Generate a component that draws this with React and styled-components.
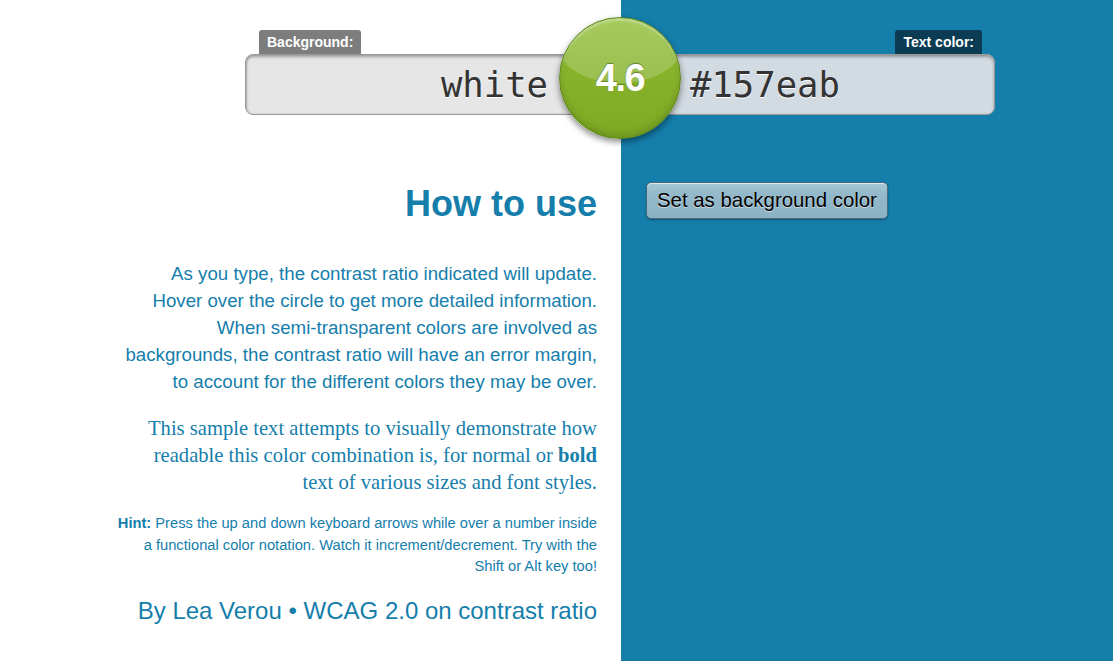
import React from 'react';
import styled, { createGlobalStyle } from 'styled-components';

const BLUE = '#157eab';

const GlobalStyle = createGlobalStyle`
  html, body {
    margin: 0;
    padding: 0;
  }
  body {
    font-family: 'Liberation Sans', Helvetica, Arial, sans-serif;
  }
`;

const Page = styled.div`
  min-height: 100vh;
  background: linear-gradient(to right, #fff 621px, ${BLUE} 621px);
  color: ${BLUE};
`;

const Header = styled.header`
  display: flex;
  align-items: flex-start;
  padding: 30px 0 0 245px;
`;

const Field = styled.div`
  display: flex;
  flex-direction: column;
  align-items: ${({ side }) => (side === 'right' ? 'flex-end' : 'flex-start')};
  position: relative;
  z-index: 1;
`;

const Label = styled.label`
  display: block;
  height: 24px;
  line-height: 25px;
  padding: 0 8px;
  margin: ${({ side }) => (side === 'right' ? '0 13px 0 0' : '0 0 0 14px')};
  border-radius: 3px 3px 0 0;
  background: ${({ side }) => (side === 'right' ? '#0b3c54' : '#7d7d7d')};
  color: #fff;
  font-size: 14px;
  font-weight: bold;
`;

const ColorInput = styled.input`
  box-sizing: border-box;
  width: 355px;
  height: 61px;
  margin: 0;
  border: 1px solid #9a9a9a;
  border-radius: 8px;
  background: ${({ side }) => (side === 'right' ? '#d3dbe2' : '#e6e6e6')};
  box-shadow: inset 0 2px 3px rgba(0, 0, 0, 0.3), inset 1px 0 2px rgba(0, 0, 0, 0.15);
  padding: ${({ side }) => (side === 'right' ? '0 0 0 49px' : '0 51px 0 0')};
  text-align: ${({ side }) => (side === 'right' ? 'left' : 'right')};
  font-family: 'DejaVu Sans Mono', Menlo, monospace;
  font-size: 35.6px;
  color: #333;
  text-shadow: 0 1px 0 #fff;
  outline: none;
`;

const Ratio = styled.div`
  position: relative;
  z-index: 2;
  flex: none;
  width: 122px;
  height: 122px;
  margin: -13px -41px 0;
  box-sizing: border-box;
  border-radius: 50%;
  border: 1px solid #5e8a1a;
  background: radial-gradient(ellipse 95% 70% at 50% 12%, rgba(255, 255, 255, 0.18) 0 60%, transparent 61%),
    linear-gradient(#93bf38, #87b32b 45%, #7ca823);
  box-shadow: inset 0 4px 2px -1px rgba(255, 255, 255, 0.3),
    inset 0 -3px 6px rgba(0, 0, 0, 0.15), 0 3px 6px rgba(0, 0, 0, 0.45);
  display: flex;
  align-items: center;
  justify-content: center;
  color: #fff;
  font-size: 38px;
  font-weight: bold;
  letter-spacing: -1.5px;
  text-shadow: 0 -1px 1px rgba(0, 0, 0, 0.35);
`;

const Main = styled.main`
  display: grid;
  grid-template-columns: 621px 1fr;
  margin-top: 43px;
`;

const Instructions = styled.section`
  box-sizing: border-box;
  padding-right: 24px;
  text-align: right;
`;

const Title = styled.h1`
  margin: 0;
  font-size: 36px;
  line-height: 43px;
  font-weight: bold;
`;

const Text = styled.p`
  margin: 35px 0 0;
  font-size: 18.7px;
  line-height: 27px;
`;

const Sample = styled.p`
  margin: 20px 0 0;
  font-family: 'Liberation Serif', Georgia, serif;
  font-size: 20.6px;
  line-height: 27px;
`;

const Hint = styled.p`
  margin: 17px 0 0;
  font-size: 14.7px;
  line-height: 21.5px;
`;

const Credits = styled.p`
  margin: 18px 0 0;
  font-size: 24px;
  line-height: 29px;
`;

const Actions = styled.section`
  padding-left: 25px;
`;

const SwapButton = styled.button`
  height: 37px;
  padding: 0 10px;
  border: 1px solid #4c6b79;
  border-radius: 5px;
  background: linear-gradient(#a9c8d6, #94b9ca 30%, #8bb2c4);
  box-shadow: inset 0 1px 0 rgba(255, 255, 255, 0.6), 0 1px 2px rgba(0, 0, 0, 0.35);
  font-family: 'Liberation Sans', Helvetica, Arial, sans-serif;
  font-size: 20.4px;
  color: #000;
  text-shadow: 0 1px 1px rgba(255, 255, 255, 0.6);
  cursor: pointer;
`;

export default function App() {
  return (
    <Page>
      <GlobalStyle />
      <Header>
        <Field>
          <Label>Background:</Label>
          <ColorInput defaultValue="white" readOnly />
        </Field>
        <Ratio>4.6</Ratio>
        <Field side="right">
          <Label side="right">Text color:</Label>
          <ColorInput side="right" defaultValue="#157eab" readOnly />
        </Field>
      </Header>
      <Main>
        <Instructions>
          <Title>How to use</Title>
          <Text>
            As you type, the contrast ratio indicated will update.<br />
            Hover over the circle to get more detailed information.<br />
            When semi-transparent colors are involved as<br />
            backgrounds, the contrast ratio will have an error margin,<br />
            to account for the different colors they may be over.
          </Text>
          <Sample>
            This sample text attempts to visually demonstrate how<br />
            readable this color combination is, for normal or <strong>bold</strong><br />
            text of various sizes and font styles.
          </Sample>
          <Hint>
            <strong>Hint:</strong> Press the up and down keyboard arrows while over a number inside<br />
            a functional color notation. Watch it increment/decrement. Try with the<br />
            Shift or Alt key too!
          </Hint>
          <Credits>By Lea Verou • WCAG 2.0 on contrast ratio</Credits>
        </Instructions>
        <Actions>
          <SwapButton>Set as background color</SwapButton>
        </Actions>
      </Main>
    </Page>
  );
}
